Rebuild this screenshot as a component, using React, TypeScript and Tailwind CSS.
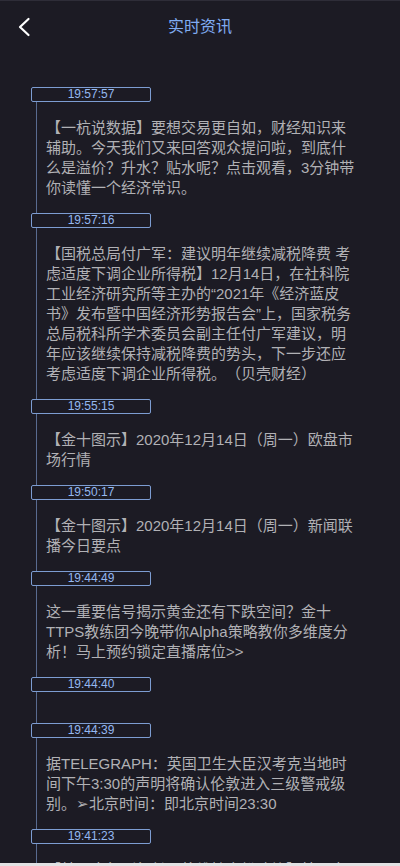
import React from "react";

type NewsItem = { time: string; text: string };

const items: NewsItem[] = [
  {
    time: "19:57:57",
    text: "【一杭说数据】要想交易更自如，财经知识来辅助。今天我们又来回答观众提问啦，到底什么是溢价？升水？贴水呢？点击观看，3分钟带你读懂一个经济常识。"
  },
  {
    time: "19:57:16",
    text: "【国税总局付广军：建议明年继续减税降费 考虑适度下调企业所得税】12月14日，在社科院工业经济研究所等主办的“2021年《经济蓝皮书》发布暨中国经济形势报告会”上，国家税务总局税科所学术委员会副主任付广军建议，明年应该继续保持减税降费的势头，下一步还应考虑适度下调企业所得税。（贝壳财经）"
  },
  { time: "19:55:15", text: "【金十图示】2020年12月14日（周一）欧盘市场行情" },
  { time: "19:50:17", text: "【金十图示】2020年12月14日（周一）新闻联播今日要点" },
  {
    time: "19:44:49",
    text: "这一重要信号揭示黄金还有下跌空间？金十TTPS教练团今晚带你Alpha策略教你多维度分析！马上预约锁定直播席位>>"
  },
  { time: "19:44:40", text: "" },
  {
    time: "19:44:39",
    text: "据TELEGRAPH：英国卫生大臣汉考克当地时间下午3:30的声明将确认伦敦进入三级警戒级别。➢北京时间：即北京时间23:30"
  },
  {
    time: "19:41:23",
    text: "【韩国央行副行长：将维持宽松政策】韩国央行副行长表示，将继续维持宽松的货币政策。"
  }
];

function BackIcon() {
  return (
    <svg width="14" height="20" viewBox="0 0 14 20" fill="none">
      <path d="M11.5 2 L3 10 L11.5 18" stroke="#ffffff" strokeWidth="2.2" strokeLinecap="round" strokeLinejoin="round" />
    </svg>
  );
}

function TimelineRow({ item }: { item: NewsItem }) {
  return (
    <div>
      <div className="ml-[31px] flex h-[15px] w-[120px] items-center justify-center rounded-[2px] border border-[#7d9dd2] text-[12px] leading-[13px] text-[#94b8f0]">
        {item.time}
      </div>
      <div className="ml-[36px] border-l border-[#596b90] pl-[9px] pt-4 pb-[15px]">
        <p className="w-[309px] text-[15px] leading-[20px] text-[#b1b1b5] [text-spacing-trim:space-all]">{item.text}</p>
      </div>
    </div>
  );
}

export default function App() {
  return (
    <div className="min-h-[866px] w-[400px] bg-[#e2e2e4]" style={{ fontFamily: '"Liberation Sans", Arial, "Noto Sans CJK SC", sans-serif' }}>
      <div className="h-[863px] overflow-hidden border-t border-[#2e2d38] bg-[#1c1b24]">
        <header className="relative flex h-[51px] items-center justify-center">
          <button type="button" className="absolute left-[17px] top-[16px]">
            <BackIcon />
          </button>
          <h1 className="text-[16px] text-[#80acf2]">实时资讯</h1>
        </header>
        <div className="pt-[35px]">
          {items.map((item) => (
            <TimelineRow item={item} key={item.time} />
          ))}
        </div>
      </div>
    </div>
  );
}
